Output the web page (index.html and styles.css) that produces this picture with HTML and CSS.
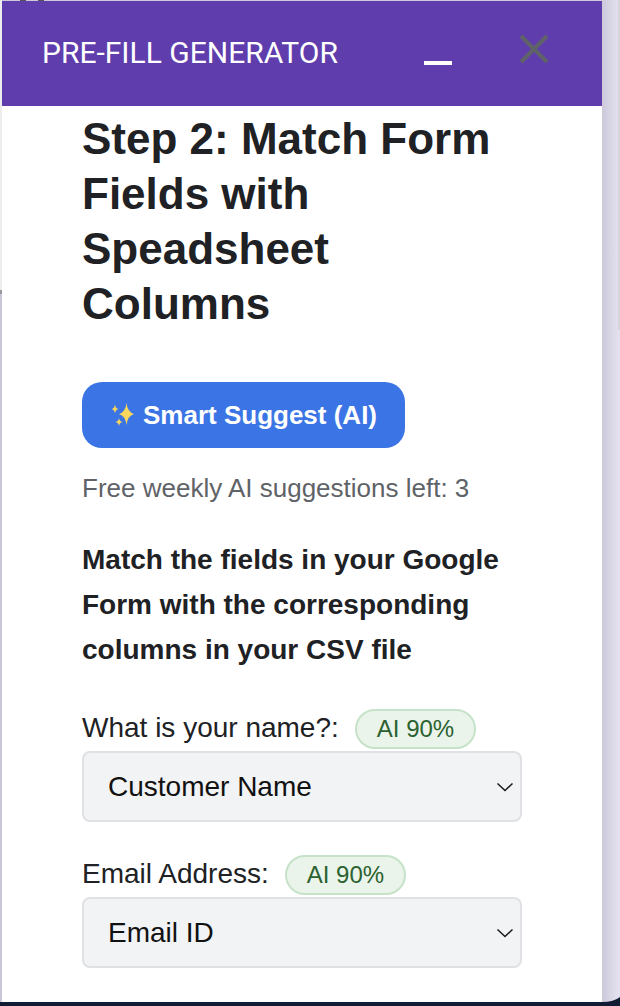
FILE: index.html
```html
<!DOCTYPE html>
<html>
<head>
<meta http-equiv="Content-Type" content="text/html; charset=UTF-8">
<meta name="viewport" content="width=device-width, initial-scale=1.0">
<title>Pre-fill generator</title>
<link rel="stylesheet" href="styles.css">
</head>
<body>
<div class='panel'>
    <div class='panel-header'>
        <span class='panel-title'>PRE-FILL GENERATOR</span>
        <span class='minimize'></span>
        <svg class='close' width='30' height='30' viewBox='0 0 30 30'>
            <path d='M2 2 L28 28 M28 2 L2 28' stroke='#5f6368' stroke-width='4' fill='none'/>
        </svg>
    </div>
    <div class='panel-body'>
        <h2>Step 2: Match Form Fields with Speadsheet Columns</h2>
        <button class='suggest-btn'>
            <svg class='sparkles' width='24' height='24' viewBox='0 0 24 24'>
                <path d='M16.500 0 Q17.500 9 24 11 Q17.500 13 16.500 22 Q15.500 13 9 11 Q15.500 9 16.500 0Z' fill='#f9d65c'/>
                <path d='M5 1.500 Q5.500 5.500 8.500 6 Q5.500 6.500 5 10.500 Q4.500 6.500 1.500 6 Q4.500 5.500 5 1.500Z' fill='#f9d65c'/>
                <path d='M9 15 Q9.500 18.500 12.500 19 Q9.500 19.500 9 23 Q8.500 19.500 5.500 19 Q8.500 18.500 9 15Z' fill='#f9d65c'/>
            </svg>
            Smart Suggest (AI)
        </button>
        <p class='quota'>Free weekly AI suggestions left: 3</p>
        <p class='intro'>Match the fields in your Google Form with the corresponding columns in your CSV file</p>

        <div class='field'>
            <div class='field-label'><span class='label-text'>What is your name?:</span> <span class='badge'>AI 90%</span></div>
            <div class='select'>
                <span>Customer Name</span>
                <svg width='18' height='10' viewBox='0 0 18 10'><path d='M1.500 1.500 L9 8.500 L16.500 1.500' stroke='#1a1a1a' stroke-width='1.500' fill='none'/></svg>
            </div>
        </div>
        <div class='field'>
            <div class='field-label'><span class='label-text'>Email Address:</span> <span class='badge'>AI 90%</span></div>
            <div class='select'>
                <span>Email ID</span>
                <svg width='18' height='10' viewBox='0 0 18 10'><path d='M1.500 1.500 L9 8.500 L16.500 1.500' stroke='#1a1a1a' stroke-width='1.500' fill='none'/></svg>
            </div>
        </div>
    </div>
</div>
<div class='desktop-strip'>
    <svg class='strip-curve' width='18' height='9' viewBox='0 0 18 9'><path d='M0 5 Q12 5 18 0 L18 9 L0 9Z' fill='#101c33'/></svg>
</div>
</body>
</html>
```

FILE: styles.css
```css
html, body {
    margin: 0;
    padding: 0;
    height: 1006px;
    overflow: hidden;
}

body {
    background:
        linear-gradient(#555, #555) 20px 0 / 6px 1px no-repeat,
        linear-gradient(#555, #555) 38px 0 / 6px 1px no-repeat,
        linear-gradient(#ededed 290px, #999 290px, #999 294px, #c9c6d8 294px) 0 0 / 2px 100% no-repeat,
        linear-gradient(#d6d6da, #d6d6da) 618px 0 / 2px 330px no-repeat,
        linear-gradient(to right, #ccc9db 602px, #e6e3f1 620px);
    font-family: "Liberation Sans", Arial, sans-serif;
    color: #202124;
}

.panel {
    width: 600px;
    height: 1001px;
    margin: 1px 0 0 2px;
    background-color: #fff;
    overflow: hidden;
}

.panel-header {
    display: flex;
    align-items: flex-start;
    height: 105px;
    background-color: #5f3dad;
    color: #fff;
}

.panel-title {
    font-family: Roboto, sans-serif;
    font-size: 30px;
    line-height: 33px;
    margin: 35px 0 0 40px;
    width: 382px;
}

.minimize {
    width: 28px;
    height: 4px;
    margin-top: 60px;
    background-color: #fff;
}

.close {
    margin: 33px 0 0 67px;
}

.panel-body {
    padding: 5px 80px 0 80px;
}

h2 {
    font-size: 44px;
    line-height: 55px;
    font-weight: bold;
    margin: 0 0 51px 0;
}

.suggest-btn {
    display: flex;
    align-items: center;
    gap: 9px;
    height: 66px;
    padding: 0 28px 0 28px;
    border: 0;
    border-radius: 20px;
    background-color: #3b74e4;
    color: #fff;
    font-family: "Liberation Sans", Arial, sans-serif;
    font-size: 26px;
    font-weight: bold;
}

.quota {
    font-size: 26px;
    line-height: 30px;
    color: #5f6368;
    margin: 25px 0 0 0;
}

.intro {
    font-size: 28px;
    line-height: 45px;
    font-weight: bold;
    margin: 34px 0 0 0;
}

.field {
    margin-bottom: 33px;
}

.field:first-of-type {
    margin-top: 37px;
}

.field-label {
    display: flex;
    align-items: center;
    gap: 16px;
    height: 40px;
    font-size: 28px;
}

.label-text {
    padding-bottom: 2px;
}

.badge {
    display: inline-block;
    box-sizing: border-box;
    height: 40px;
    line-height: 36px;
    padding: 0 20px;
    border: 2px solid #c6e2c9;
    border-radius: 20px;
    background-color: #eaf4ea;
    color: #2b6230;
    font-size: 24px;
}

.select {
    display: flex;
    align-items: center;
    justify-content: space-between;
    box-sizing: border-box;
    width: 440px;
    height: 71px;
    margin-top: 2px;
    padding: 0 6px 0 24px;
    border: 2px solid #dfe1e5;
    border-radius: 8px;
    background-color: #f1f3f4;
    color: #111;
    font-size: 28px;
}

.desktop-strip {
    position: relative;
    height: 4px;
    background-color: #101c33;
}

.strip-curve {
    position: absolute;
    right: 0;
    bottom: 0;
}
```
